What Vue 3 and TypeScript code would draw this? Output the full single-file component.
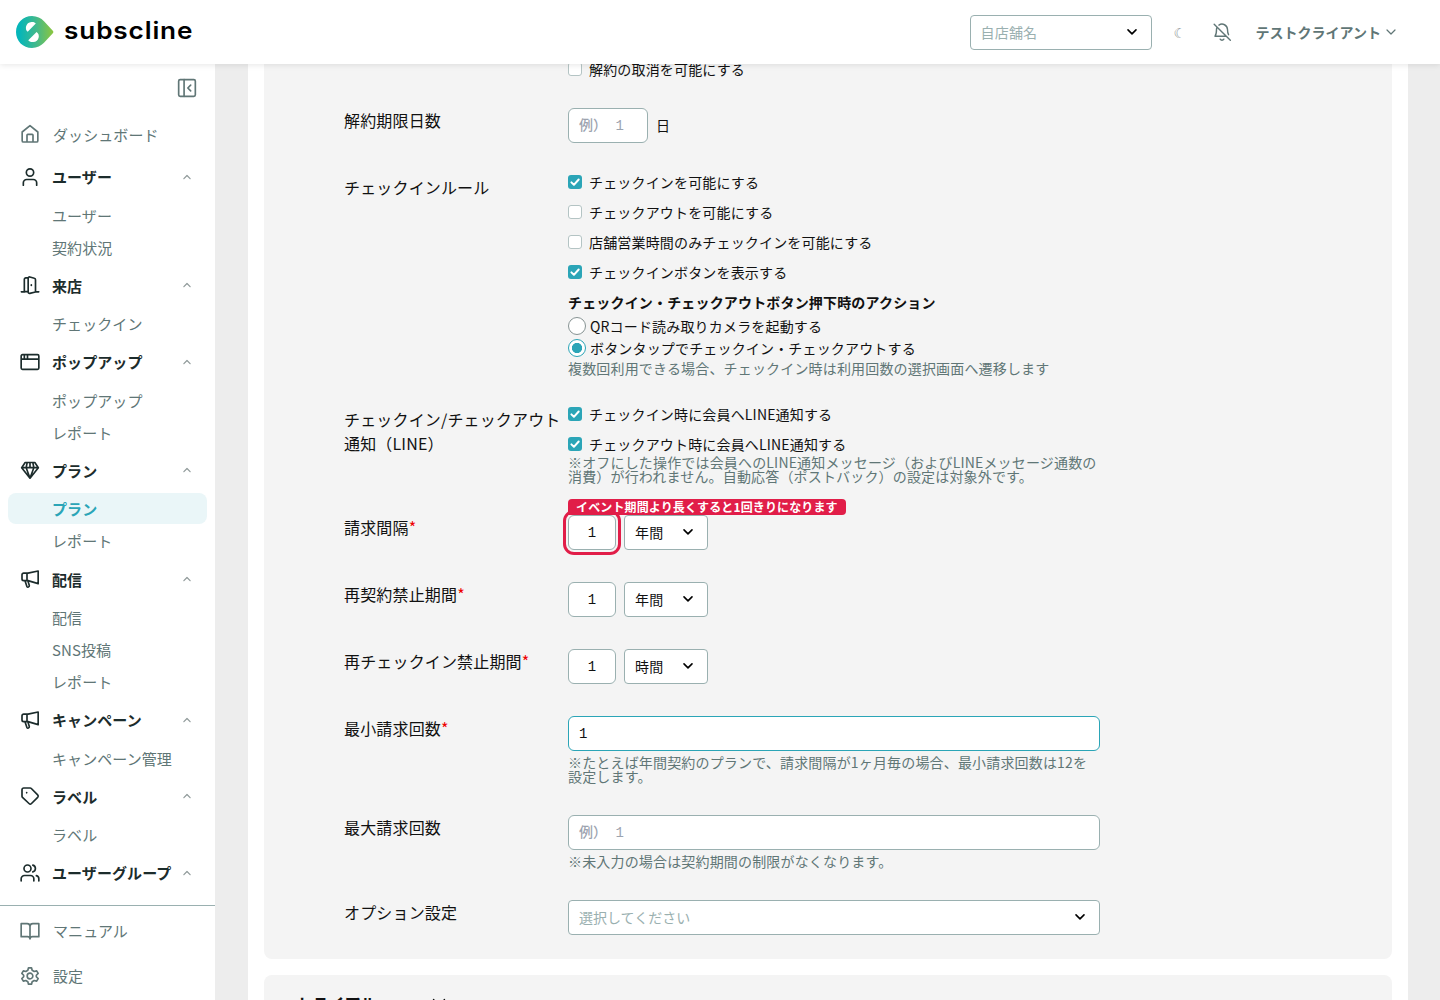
<script setup lang="ts">
interface Section {
  title: string
  icon: string
  items: string[]
  active?: string
}

const icons: Record<string, string> = {
  home: 'M2.600 9.600 12 2l9.400 7.600V20a1.600 1.600 0 0 1-1.600 1.600H4.200A1.600 1.600 0 0 1 2.600 20ZM8.400 21.400v-8a1 1 0 0 1 1-1h5.200a1 1 0 0 1 1 1v8',
  user: 'M12 11a4.400 4.400 0 1 0 0-8.800A4.400 4.400 0 0 0 12 11ZM4 21.800V19a4 4 0 0 1 4-4h8a4 4 0 0 1 4 4v2.800',
  door: 'M1.600 20.200H6M18.500 20.200h4M9.400 20H5.200V5.200A1.800 1.800 0 0 1 7 3.400h3M18.600 20.400V5.600a1.800 1.800 0 0 0-1.400-1.700l-5.400-1.500a1.600 1.600 0 0 0-2 1.500v16.500a1.600 1.600 0 0 0 2 1.600l6.800-1.600M13.600 11.800v.8',
  window: 'M3 3.200h18a1.600 1.600 0 0 1 1.600 1.600v14.400a1.600 1.600 0 0 1-1.600 1.600H3a1.600 1.600 0 0 1-1.600-1.600V4.800A1.600 1.600 0 0 1 3 3.200ZM1.400 8.600h21.200M5.200 3.400v5M9 3.400v5',
  gem: 'M6.200 3h11.600l4.200 6.200L12 21.800 2 9.200ZM2 9.200h20M8.600 3 7.400 9.200 12 21.800 16.600 9.200 15.400 3M12 3v6',
  horn: 'M21.800 2.400v15.200L9.600 14H4.400a2 2 0 0 1-2-2V7a2 2 0 0 1 2-2h5.200ZM8.400 5v9M6 14l2.200 6.800a1.600 1.600 0 0 0 3-1l-1.800-5.600',
  tag: 'M2.400 4.400a2 2 0 0 1 2-2h7.800a2 2 0 0 1 1.400.6l7.600 7.600a2.200 2.200 0 0 1 0 3l-7.400 7.400a2.200 2.200 0 0 1-3 0L3 13.600a2 2 0 0 1-.6-1.400ZM8 7.800v.4',
  users: 'M9 10.800a4.200 4.200 0 1 0 0-8.400 4.200 4.200 0 0 0 0 8.400ZM1.400 21.600V19a4 4 0 0 1 4-4h7.200a4 4 0 0 1 4 4v2.600M15.400 2.600a4.200 4.200 0 0 1 0 8.100M22.600 21.600V19a4 4 0 0 0-3-3.900',
  book: 'M12 6.400a3.400 3.400 0 0 0-3.400-3.200H1.400v15.600H9a3 3 0 0 1 3 2.600 3 3 0 0 1 3-2.600h7.600V3.200h-7.200A3.400 3.400 0 0 0 12 6.400Zm0 0v15',
  gear: 'M12 15.400a3.400 3.400 0 1 0 0-6.800 3.400 3.400 0 0 0 0 6.800ZM10.200 2.200h3.600l.8 3 2.400 1.400 3-.8 1.800 3.100-2.200 2.200v1.800l2.200 2.200-1.800 3.100-3-.8-2.400 1.400-.8 3h-3.600l-.8-3L7 17.400l-3 .8-1.800-3.100 2.200-2.200v-1.800L2.200 8.900 4 5.800l3 .8 2.400-1.400Z',
}

const sections: Section[] = [
  { title: 'ユーザー', icon: 'user', items: ['ユーザー', '契約状況'] },
  { title: '来店', icon: 'door', items: ['チェックイン'] },
  { title: 'ポップアップ', icon: 'window', items: ['ポップアップ', 'レポート'] },
  { title: 'プラン', icon: 'gem', items: ['プラン', 'レポート'], active: 'プラン' },
  { title: '配信', icon: 'horn', items: ['配信', 'SNS投稿', 'レポート'] },
  { title: 'キャンペーン', icon: 'horn', items: ['キャンペーン管理'] },
  { title: 'ラベル', icon: 'tag', items: ['ラベル'] },
  { title: 'ユーザーグループ', icon: 'users', items: [] },
]

const checkinRules = [
  { label: 'チェックインを可能にする', on: true },
  { label: 'チェックアウトを可能にする', on: false },
  { label: '店舗営業時間のみチェックインを可能にする', on: false },
  { label: 'チェックインボタンを表示する', on: true },
]
const notices = ['チェックイン時に会員へLINE通知する', 'チェックアウト時に会員へLINE通知する']
const periods = [
  { label: '請求間隔', unit: '年間', flagged: true },
  { label: '再契約禁止期間', unit: '年間', flagged: false },
  { label: '再チェックイン禁止期間', unit: '時間', flagged: false },
]
</script>

<template>
  <div class="app">
    <header class="header">
      <div class="logo">
        <svg width="38" height="32" viewBox="0 0 38 32">
          <defs>
            <linearGradient id="brand" x1="0" y1="0" x2="1" y2="0">
              <stop offset="0.1" stop-color="#06b6b9" />
              <stop offset="0.55" stop-color="#43b98a" />
              <stop offset="1" stop-color="#8cc63f" />
            </linearGradient>
          </defs>
          <path d="M16 0C7 0 0 7 0 16s7 16 16 16c5 0 9-2.200 12-5.200l8.600-9.200a2.300 2.300 0 0 0 0-3.200L28 5.200C25 2.200 21 0 16 0Z" fill="url(#brand)" />
          <path d="M19.800 7.500 11.700 15.800C8.500 13.500 9.500 6.200 15.500 5.900c2.300-.1 3.700.5 4.300 1.600ZM12.300 24.200 20.600 15.900c4 2.500 2.500 9.700-3.300 10.100-2.500.2-4.200-.5-5-1.800Z" fill="#fff" />
        </svg>
        <span class="wordmark">subscline</span>
      </div>
      <div class="tools">
        <div class="select shop">
          <span>自店舗名</span>
          <svg class="chev" width="12" height="12" viewBox="0 0 12 12"><path d="m2 3.900 4 4 4-4" /></svg>
        </div>
        <span class="moon">☾</span>
        <svg class="bell" width="20" height="20" viewBox="0 0 24 24">
          <path d="M2.600 2.600 22 22M8.300 3.700A6.600 6.600 0 0 1 18.600 9c0 3 .6 5 1.300 6.300M17 17H3.600c1-1.200 1.800-3.600 1.800-8 0-.8.100-1.500.4-2.200M9.800 20.600a2.600 2.600 0 0 0 4.400 0" />
        </svg>
        <span class="client">テストクライアント</span>
        <svg class="caret" width="10" height="10" viewBox="0 0 10 10"><path d="m1 3 4 4 4-4" /></svg>
      </div>
    </header>

    <div class="body">
      <nav class="side">
        <div class="collapse">
          <svg width="20" height="20" viewBox="0 0 24 24">
            <rect x="2" y="2" width="20" height="20" rx="1.800" /><path d="M8.500 2v20M16.400 8.600 13 12l3.400 3.400" />
          </svg>
        </div>
        <div class="scroll">
          <div class="link">
            <svg class="ico" viewBox="0 0 24 24"><path :d="icons.home" /></svg><span>ダッシュボード</span>
          </div>
          <section v-for="s in sections" :key="s.title">
            <div class="head">
              <svg class="ico" viewBox="0 0 24 24"><path :d="icons[s.icon]" /></svg>
              <span>{{ s.title }}</span>
              <svg class="up" width="10" height="10" viewBox="0 0 10 10"><path d="M1.900 6.700 5 3.500l3.100 3.200" /></svg>
            </div>
            <div v-for="i in s.items" :key="i" class="item" :class="{ active: i === s.active }">{{ i }}</div>
          </section>
        </div>
        <div class="foot">
          <div class="link"><svg class="ico" viewBox="0 0 24 24"><path :d="icons.book" /></svg><span>マニュアル</span></div>
          <div class="link"><svg class="ico" viewBox="0 0 24 24"><path :d="icons.gear" /></svg><span>設定</span></div>
        </div>
      </nav>

      <main class="main">
        <div class="page">
          <div class="card">
            <div class="row">
              <div class="label"></div>
              <div class="field"><div class="check"><i class="box"></i><span>解約の取消を可能にする</span></div></div>
            </div>
            <div class="row">
              <div class="label">解約期限日数</div>
              <div class="field inline">
                <div class="input days ph">例） 1</div><span class="unit">日</span>
              </div>
            </div>
            <div class="row">
              <div class="label">チェックインルール</div>
              <div class="field">
                <div v-for="c in checkinRules" :key="c.label" class="check">
                  <i class="box" :class="{ on: c.on }">
                    <svg v-if="c.on" width="14" height="14" viewBox="0 0 14 14"><path d="m3.400 7.400 2.500 2.400 4.800-5.300" /></svg>
                  </i>
                  <span>{{ c.label }}</span>
                </div>
                <div class="subhead">チェックイン・チェックアウトボタン押下時のアクション</div>
                <div class="radio"><i></i><span>QRコード読み取りカメラを起動する</span></div>
                <div class="radio on"><i></i><span>ボタンタップでチェックイン・チェックアウトする</span></div>
                <div class="hint">複数回利用できる場合、チェックイン時は利用回数の選択画面へ遷移します</div>
              </div>
            </div>
            <div class="row">
              <div class="label">チェックイン/チェックアウト<br />通知（LINE）</div>
              <div class="field">
                <div v-for="n in notices" :key="n" class="check">
                  <i class="box on"><svg width="14" height="14" viewBox="0 0 14 14"><path d="m3.400 7.400 2.500 2.400 4.800-5.300" /></svg></i>
                  <span>{{ n }}</span>
                </div>
                <div class="hint">※オフにした操作では会員へのLINE通知メッセージ（およびLINEメッセージ通数の<br />消費）が行われません。自動応答（ポストバック）の設定は対象外です。</div>
              </div>
            </div>
            <div v-for="p in periods" :key="p.label" class="row">
              <div class="label">{{ p.label }}<b>*</b></div>
              <div class="field inline">
                <div class="input num" :class="{ flagged: p.flagged }">1</div>
                <div class="select period">
                  <span>{{ p.unit }}</span>
                  <svg class="chev" width="12" height="12" viewBox="0 0 12 12"><path d="m2 3.900 4 4 4-4" /></svg>
                </div>
                <div v-if="p.flagged" class="callout">イベント期間より長くすると1回きりになります</div>
              </div>
            </div>
            <div class="row">
              <div class="label">最小請求回数<b>*</b></div>
              <div class="field">
                <div class="input focus">1</div>
                <div class="hint">※たとえば年間契約のプランで、請求間隔が1ヶ月毎の場合、最小請求回数は12を<br />設定します。</div>
              </div>
            </div>
            <div class="row">
              <div class="label">最大請求回数</div>
              <div class="field">
                <div class="input ph">例） 1</div>
                <div class="hint">※未入力の場合は契約期間の制限がなくなります。</div>
              </div>
            </div>
            <div class="row">
              <div class="label">オプション設定</div>
              <div class="field">
                <div class="select">
                  <span class="muted">選択してください</span>
                  <svg class="chev" width="12" height="12" viewBox="0 0 12 12"><path d="m2 3.900 4 4 4-4" /></svg>
                </div>
              </div>
            </div>
          </div>
          <div class="card next">
            <h3>トライアル</h3>
            <svg width="14" height="14" viewBox="0 0 14 14"><path d="m1.500 3.500 5.500 5.500 5.500-5.500" /></svg>
          </div>
        </div>
      </main>
    </div>
  </div>
</template>

<style>
body { overflow: hidden; }
</style>

<style scoped>
* { box-sizing: border-box; }
.app {
  width: 1440px; height: 1000px; overflow: hidden; display: flex; flex-direction: column;
  font-family: "Noto Sans CJK JP", sans-serif; font-size: 14px; line-height: 1; letter-spacing: .012em;
  color: #111; background: #ededed;
}
svg { flex: none; fill: none; stroke: currentColor; stroke-linecap: round; stroke-linejoin: round; }
.header {
  height: 64px; flex: none; background: #fff; display: flex; align-items: center; justify-content: space-between;
  padding: 0 44px 0 16px; box-shadow: 0 1px 6px rgba(0, 0, 0, .1); position: relative; z-index: 2;
}
.logo { display: flex; align-items: center; }
.logo svg { stroke: none; }
.wordmark {
  font: 600 24px/32px Inter, sans-serif; letter-spacing: .8px; margin: -2px 0 0 10px; color: #000;
  transform: scaleX(1.09); transform-origin: 0 50%;
}
.tools { display: flex; align-items: center; color: #607676; }
.select {
  height: 35px; border: 1px solid #9ab0b0; border-radius: 4px; background: #fff; padding: 0 13px 0 10px;
  display: flex; align-items: center; justify-content: space-between;
}
.select span { margin-top: -2px; }
.select .chev { color: #000; stroke-width: 1.6; margin-top: -2px; }
.shop { width: 182px; color: #9ab0b0; }
.shop span { margin-top: 0; }
.shop .chev { margin-top: -1px; }
.moon { width: 14px; margin: 2px 0 0 22px; font-family: "DejaVu Sans", sans-serif; font-size: 14px; color: #8a9595; }
.bell { margin-left: 24px; stroke-width: 1.7; }
.client { margin-left: 24px; font-weight: 700; letter-spacing: 0; }
.caret { margin-left: 5px; stroke-width: 1.2; }

.body { flex: 1; min-height: 0; display: flex; }
.side { width: 215px; flex: none; background: #fff; display: flex; flex-direction: column; font-size: 15px; letter-spacing: .005em; color: #607676; white-space: nowrap; }
.collapse { height: 48px; flex: none; display: flex; align-items: center; justify-content: flex-end; padding-right: 18px; stroke-width: 2; }
.scroll { flex: 1; min-height: 0; overflow: hidden; }
.ico { width: 20px; height: 20px; stroke-width: 2; }
.link { height: 45px; display: flex; align-items: center; padding-left: 20px; gap: 13px; }
.scroll .link { height: 42.35px; padding-top: 1px; }
.scroll .link span { padding-top: 2px; }
.head { height: 44.6px; display: flex; align-items: center; padding: 0 23px 0 20px; gap: 12px; color: #1c2c2c; font-weight: 700; }
.head span { margin-right: -4px; }
.head .up { margin-left: auto; color: #909a9a; stroke-width: 1.2; }
.item { height: 31px; margin: 0 8px 1px; border-radius: 8px; padding: .65px 0 0 44px; line-height: 31.800px; }
.item.active { background: #eaf6f8; color: #2ba5b7; font-weight: 700; }
.foot { height: 95px; flex: none; border-top: 1px solid #9ab0b0; padding-top: 2px; }

.main { flex: 1; padding: 0 32px 0 33px; overflow: hidden; }
.page { background: #fff; height: 936px; padding: 0 16px; overflow: hidden; }
.card { background: #f4f4f4; border-radius: 0 0 8px 8px; padding: 0 80px 24px; height: 895px; display: flex; flex-direction: column; gap: 32px; }
.card > .row:first-child { margin-top: -2px; }
.row { display: flex; flex: none; }
.label { width: 224px; flex: none; font-size: 16px; line-height: 24px; letter-spacing: .01em; white-space: nowrap; }
.label b { color: #e00; font-weight: 400; }
.field { width: 532px; }
.inline { display: flex; gap: 8px; position: relative; }
.check { height: 14px; display: flex; align-items: center; gap: 7px; margin-bottom: 16px; white-space: nowrap; }
.check:last-child { margin-bottom: 0; }
.box { width: 14px; height: 14px; border: 1px solid #b4c4c4; border-radius: 3px; background: #fff; flex: none; }
.box.on { border: 0; background: #2ba5b7; color: #fff; }
.box svg { display: block; stroke-width: 2; }
.subhead { font-weight: 700; height: 14px; margin-bottom: 8px; white-space: nowrap; }
.radio { height: 18px; display: flex; align-items: center; gap: 4px; margin-bottom: 4px; }
.radio i { width: 18px; height: 18px; border: 1px solid #879393; border-radius: 50%; background: #fff; }
.radio.on i { border-color: #2ba5b7; background: radial-gradient(circle, #2ba5b7 0 4.800px, #fff 5.400px); }
.hint { line-height: 14px; color: #607676; white-space: nowrap; }
.check + .hint { margin-top: -12px; }
.input {
  height: 35px; border: 1px solid #9ab0b0; border-radius: 6px; background: #fff; padding: 0 10px;
  font-family: "Liberation Mono", "Noto Sans CJK JP", monospace; line-height: 35px; letter-spacing: 0; white-space: pre;
}
.input + .hint { margin-top: 4px; }
.ph { color: #9ca3af; font-weight: 500; }
.days { width: 80px; }
.unit { line-height: 35px; }
.num { width: 48px; padding: 0; text-align: center; }
.flagged { outline: 3px solid #e11d48; outline-offset: 2px; }
.focus { border-color: #2ba5b7; }
.period { width: 84px; }
.muted { color: #9ab0b0; letter-spacing: 0; }
.callout {
  position: absolute; left: 0; top: -16px; height: 16px; padding: 0 8px; border-radius: 4px 4px 4px 0;
  background: #e11d48; color: #fff; font-size: 12px; font-weight: 700; line-height: 16px; letter-spacing: .011em; white-space: nowrap;
}
.next { margin-top: 16px; border-radius: 8px 8px 0 0; padding: 16px 32px; height: 120px; flex-direction: row; gap: 55px; }
.next h3 { margin: 0; font-size: 16px; line-height: 24px; }
.next svg { margin-top: 5px; stroke-width: 1.3; }
</style>
